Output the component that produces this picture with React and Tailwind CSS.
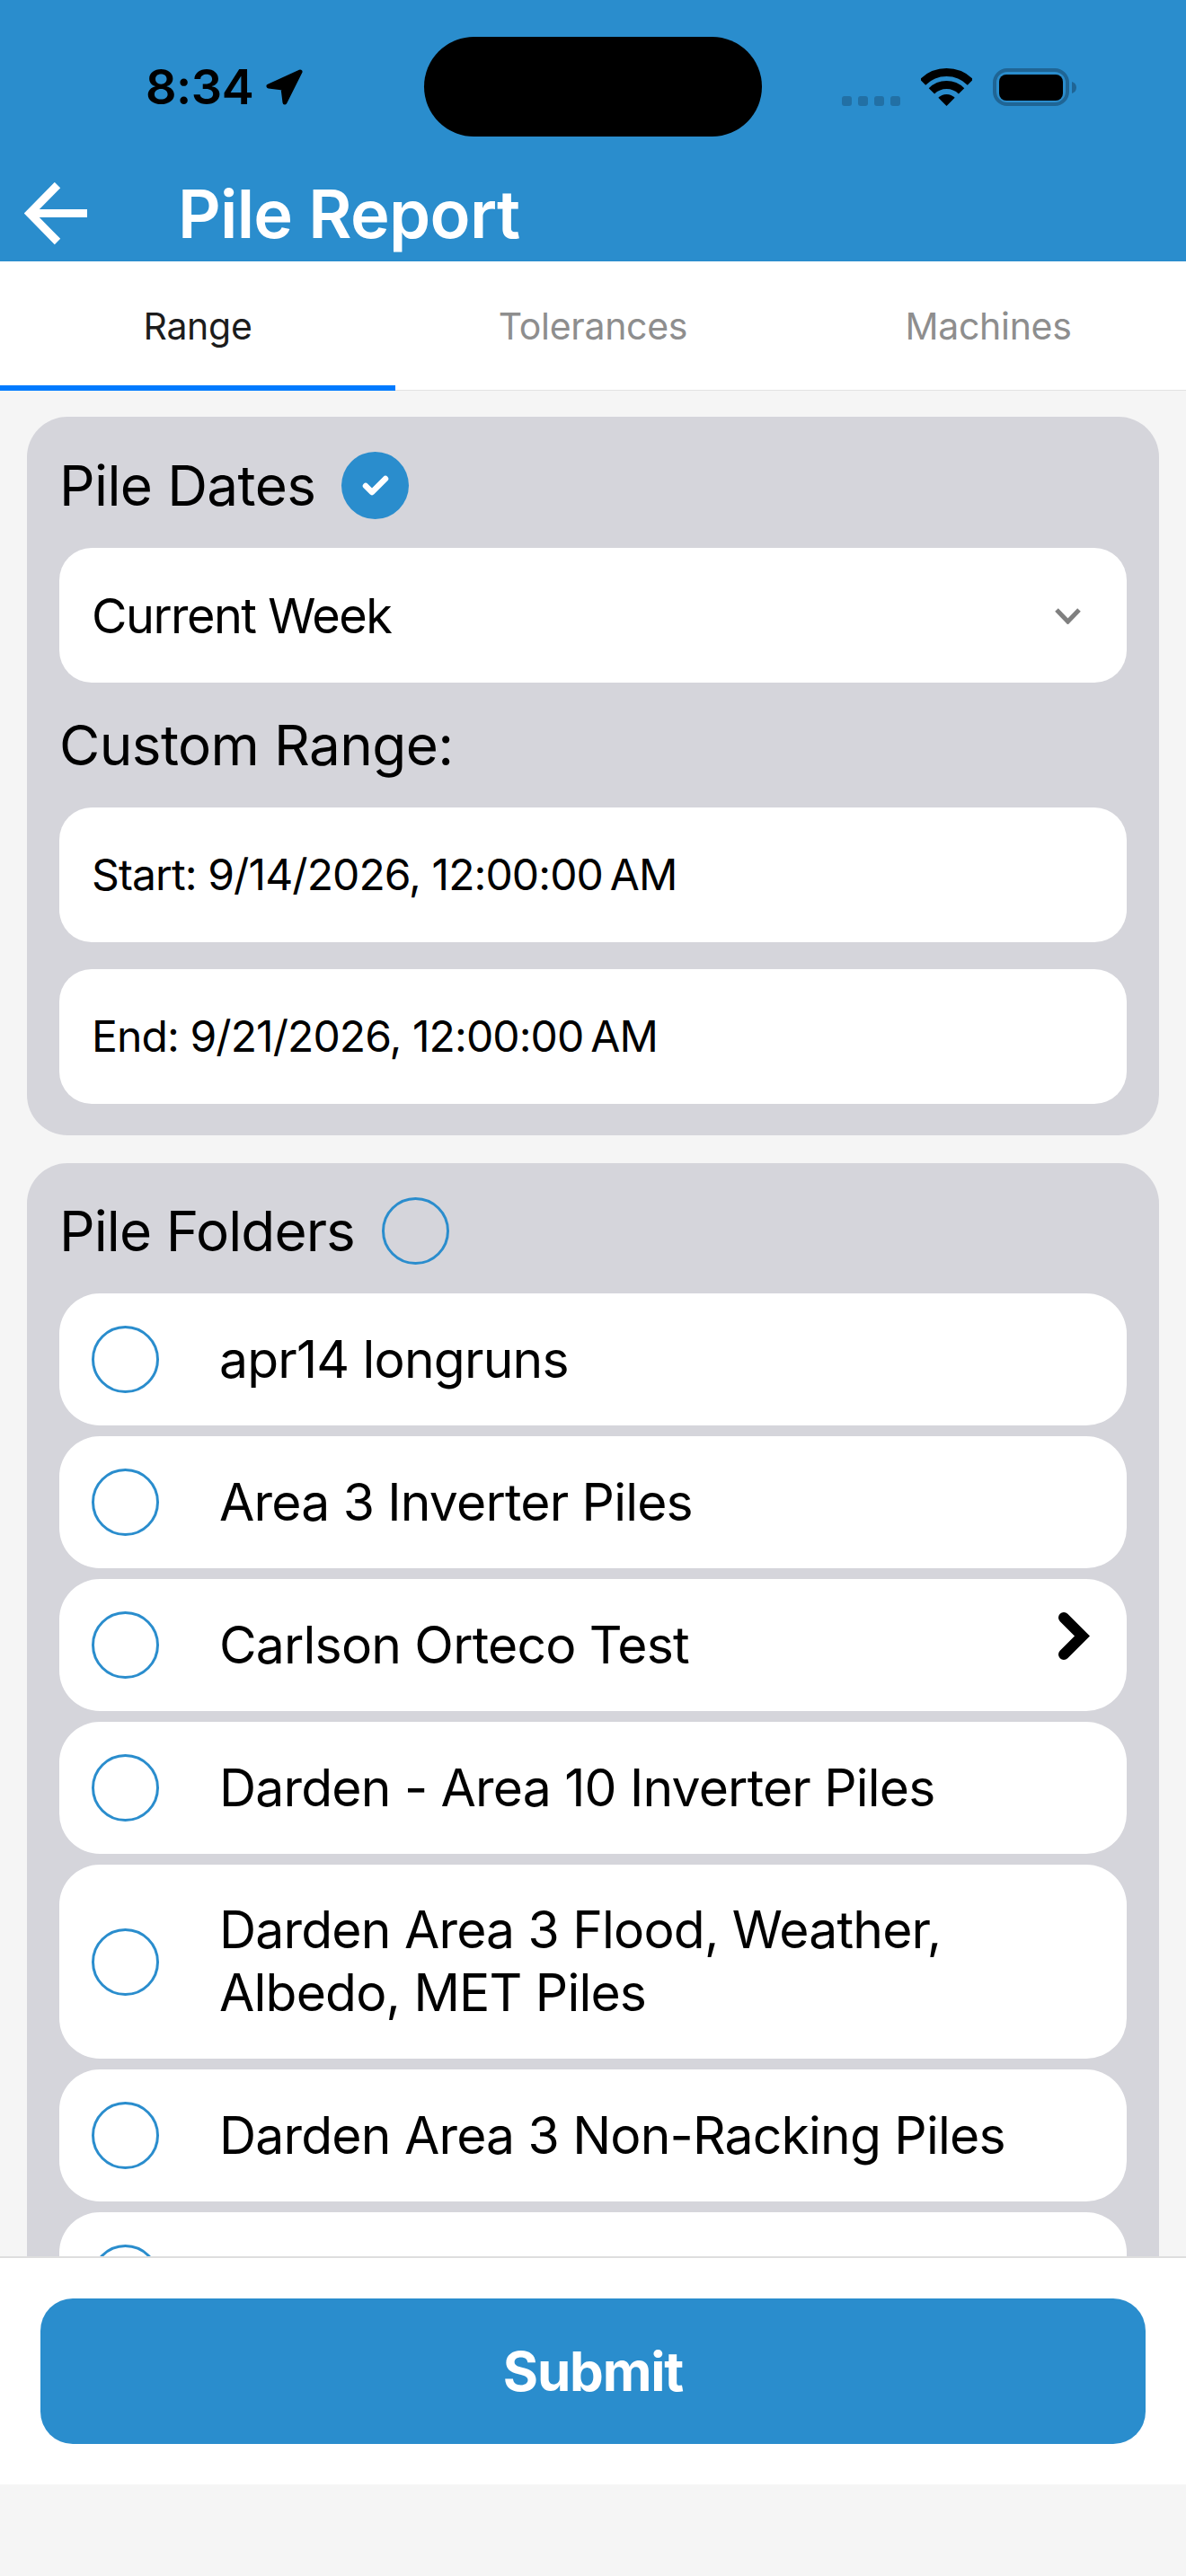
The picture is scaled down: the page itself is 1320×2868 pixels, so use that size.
import React from "react";

const folders = [
  { name: "apr14 longruns" },
  { name: "Area 3 Inverter Piles" },
  { name: "Carlson Orteco Test", chevron: true },
  { name: "Darden - Area 10 Inverter Piles" },
  { name: "Darden Area 3 Flood, Weather, Albedo, MET Piles" },
  { name: "Darden Area 3 Non-Racking Piles" },
  { name: "" },
];

const tabs = ["Range", "Tolerances", "Machines"];

const StatusBar = () => (
  <div className="flex items-center pt-[41px] h-[152px]">
    <div className="w-[472px] pl-[162px] flex items-center gap-[14px]">
      <span className="text-[54px] leading-[60px] font-semibold text-black tracking-[-0.5px]">8:34</span>
      <svg width="41" height="40" viewBox="0 0 41 40">
        <path d="M38 3L3 19L19 21L21 37Z" fill="#000" stroke="#000" strokeWidth="5" strokeLinejoin="round" />
      </svg>
    </div>
    <div className="w-[376px] h-[111px] bg-black rounded-[56px]" />
    <div className="flex-1 pl-[89px] flex items-end gap-[23px] h-[42px]">
      <div className="flex gap-[7px]">
        <div className="w-[11px] h-[11px] rounded-[3px] bg-[#2270a5]" />
        <div className="w-[11px] h-[11px] rounded-[3px] bg-[#2270a5]" />
        <div className="w-[11px] h-[11px] rounded-[3px] bg-[#2270a5]" />
        <div className="w-[11px] h-[11px] rounded-[3px] bg-[#2270a5]" />
      </div>
      <svg width="57" height="42" viewBox="0 0 57 42" fill="none">
        <path d="M2 15.5A37.5 37.5 0 0 1 55 15.5" stroke="#000" strokeWidth="9" />
        <path d="M11.9 25.4A23.5 23.5 0 0 1 45.1 25.4" stroke="#000" strokeWidth="9" />
        <path d="M28.5 42L19.3 32.8A13 13 0 0 1 37.7 32.8Z" fill="#000" />
      </svg>
      <svg width="93" height="42" viewBox="0 0 93 42" fill="none">
        <rect x="2" y="2" width="81" height="38" rx="14" stroke="#1f6595" strokeWidth="4" />
        <rect x="7" y="7" width="71" height="29" rx="8" fill="#000" />
        <path d="M88 15C91 16 93 18 93 21.5C93 25 91 27 88 28Z" fill="#1f6595" />
      </svg>
    </div>
  </div>
);

const Circle = ({ checked }) => (
  <div
    className={`w-[75px] h-[75px] shrink-0 rounded-full flex items-center justify-center ${
      checked ? "bg-[#2a8dcd]" : "border-[3px] border-[#2a8dcd]"
    }`}
  >
    {checked && (
      <svg width="30" height="24" viewBox="0 0 30 24" fill="none">
        <path d="M4 12L11 19L26 4" stroke="#fff" strokeWidth="6.5" strokeLinecap="round" strokeLinejoin="round" />
      </svg>
    )}
  </div>
);

const FolderRow = ({ name, chevron }) => (
  <div className="flex items-center min-h-[147px] py-[36px] pl-[36px] pr-[40px] bg-white rounded-[45px]">
    <Circle />
    <div className="flex-1 py-[2px] pl-[67px] pr-[20px] text-[57px] leading-[70px] tracking-[-0.8px] text-black">{name}</div>
    {chevron && (
      <svg className="shrink-0 self-start" width="37" height="55" viewBox="0 0 37 55" fill="none">
        <path d="M7 7L27.5 27.5L7 48" stroke="#000" strokeWidth="12" strokeLinecap="round" />
      </svg>
    )}
  </div>
);

export default function App() {
  return (
    <div className="w-[1320px] h-[2868px] flex flex-col overflow-hidden bg-[#f5f5f5] font-[family-name:Inter,sans-serif]">
      {/* Header */}
      <div className="h-[291px] bg-[#2a8dcd] shrink-0">
        <StatusBar />
        <div className="flex items-center h-[80px] mt-[46px] pl-[27px]">
          <svg width="70" height="70" viewBox="0 0 70 70" fill="none">
            <path d="M70 34.5H8" stroke="#fff" strokeWidth="9" />
            <path d="M37 3L6 34.5L37 66" stroke="#fff" strokeWidth="9" />
          </svg>
          <h1 className="ml-[101px] text-[74px] leading-[80px] font-semibold text-white tracking-[-0.7px]">Pile Report</h1>
        </div>
      </div>

      {/* Tabs */}
      <div className="h-[144px] shrink-0 flex bg-white border-b border-[#e2e2e2]">
        {tabs.map((tab, i) => (
          <div
            key={tab}
            className={`flex-1 flex items-center justify-center pt-[8px] -mb-px border-b-[6px] text-[41px] tracking-[-0.3px] ${
              i === 0 ? "text-[#1c1c1c] border-[#007aff]" : "text-[#8e8e8e] border-transparent"
            }`}
          >
            {tab}
          </div>
        ))}
      </div>

      {/* Scroll area */}
      <div className="flex-1 overflow-hidden px-[30px] pt-[29px] flex flex-col gap-[31px]">
        <div className="shrink-0 bg-[#d5d5db] rounded-[45px] px-[36px] pt-[39px] pb-[35px]">
          <div className="flex items-center gap-[29px] mb-[32px]">
            <span className="text-[62px] leading-[75px] tracking-[-0.6px] text-black">Pile Dates</span>
            <Circle checked />
          </div>
          <div className="h-[150px] bg-white rounded-[36px] pl-[36px] pr-[50px] flex items-center justify-between">
            <span className="text-[54px] tracking-[-1.5px] text-black">Current Week</span>
            <svg width="31" height="19" viewBox="0 0 31 19" fill="none">
              <path d="M3 3L15.5 16L28 3" stroke="#808080" strokeWidth="5" />
            </svg>
          </div>
          <div className="mt-[34px] mb-[33px] text-[62px] leading-[72px] tracking-[-0.6px] text-black">Custom Range:</div>
          <div className="flex flex-col gap-[30px]">
            <div className="h-[150px] bg-white rounded-[36px] pl-[36px] flex items-center text-[48px] tracking-[-0.9px] text-black">
              Start: 9/14/2026, 12:00:00{"\u202f"}AM
            </div>
            <div className="h-[150px] bg-white rounded-[36px] pl-[36px] flex items-center text-[48px] tracking-[-0.9px] text-black">
              End: 9/21/2026, 12:00:00{"\u202f"}AM
            </div>
          </div>
        </div>

        <div className="shrink-0 bg-[#d5d5db] rounded-[45px] px-[36px] pt-[38px]">
          <div className="flex items-center gap-[30px] mb-[32px]">
            <span className="text-[62px] leading-[75px] tracking-[-0.9px] text-black">Pile Folders</span>
            <Circle />
          </div>
          <div className="flex flex-col gap-[12px]">
            {folders.map((f, i) => (
              <FolderRow key={i} name={f.name} chevron={f.chevron} />
            ))}
          </div>
        </div>
      </div>

      {/* Footer */}
      <div className="h-[254px] shrink-0 bg-white border-t-[2px] border-[#dedede] px-[45px] pt-[45px]">
        <button className="w-full h-[162px] bg-[#2a8dcd] rounded-[36px] text-[60px] font-bold tracking-[-1.2px] text-white">Submit</button>
      </div>
      <div className="h-[102px] shrink-0 bg-[#f5f5f5]" />
    </div>
  );
}
